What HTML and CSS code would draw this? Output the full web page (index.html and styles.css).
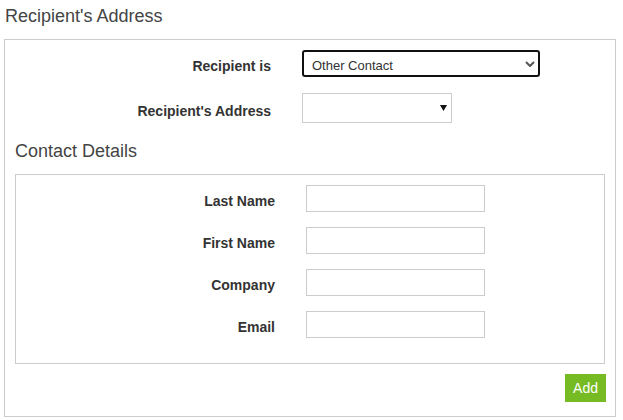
FILE: index.html
```html
<!DOCTYPE html>
<html lang="en">
<head>
  <meta charset="UTF-8" />
  <meta name="viewport" content="width=device-width, initial-scale=1.0" />
  <title>Recipient's Address</title>
  <link rel="stylesheet" href="styles.css">
</head>
<body>
  <div class="page">
    <h3 class="section-title">Recipient's Address</h3>

    <div class="panel">
      <div class="form-row">
        <label class="row-label" for="recipientIs">Recipient is</label>
        <div class="select-wrap select-main">
          <select id="recipientIs" class="select-focus">
            <option>Other Contact</option>
          </select>
          <svg class="chevron" width="10" height="6" viewBox="0 0 10 6">
            <path d="M1 1 L5 5 L9 1" fill="none" stroke="#555" stroke-width="2" />
          </svg>
        </div>
      </div>

      <div class="form-row">
        <label class="row-label" for="recipientAddress">Recipient's Address</label>
        <div class="select-wrap select-small">
          <select id="recipientAddress" class="select-plain">
            <option></option>
          </select>
          <svg class="caret" width="7" height="6" viewBox="0 0 7 6">
            <polygon points="0,0 7,0 3.5,6" fill="#111" />
          </svg>
        </div>
      </div>

      <h3 class="section-title sub-title">Contact Details</h3>

      <div class="contact-box">
        <div class="form-row contact-row">
          <label class="row-label" for="lastName">Last Name</label>
          <input id="lastName" type="text" class="text-input" />
        </div>
        <div class="form-row contact-row">
          <label class="row-label" for="firstName">First Name</label>
          <input id="firstName" type="text" class="text-input" />
        </div>
        <div class="form-row contact-row">
          <label class="row-label" for="company">Company</label>
          <input id="company" type="text" class="text-input" />
        </div>
        <div class="form-row contact-row">
          <label class="row-label" for="email">Email</label>
          <input id="email" type="text" class="text-input" />
        </div>
      </div>

      <div class="actions">
        <button class="btn-add">Add</button>
      </div>
    </div>
  </div>
</body>
</html>
```

FILE: styles.css
```css
body {
  margin: 0;
  font-family: "Liberation Sans", Arial, sans-serif;
  color: #333;
  background: #fff;
}

.page {
  padding: 6px 7px 0 4px;
}

.section-title {
  margin: 0 0 13px 1px;
  font-size: 18px;
  line-height: 20px;
  font-weight: normal;
  color: #444;
}

/* Outer bordered panel */
.panel {
  border: 1px solid #ccc;
  padding: 10px 10px 14px;
}

.form-row {
  display: grid;
  grid-template-columns: 256px auto;
  column-gap: 31px;
  align-items: center;
  margin-bottom: 16px;
}

.row-label {
  text-align: right;
  font-size: 14px;
  font-weight: bold;
  color: #333;
  padding-top: 5px;
}

.select-wrap {
  position: relative;
  justify-self: start;
}

select {
  appearance: none;
  -webkit-appearance: none;
  display: block;
  font-family: "Liberation Sans", Arial, sans-serif;
  font-size: 13px;
  color: #333;
  background: #fff;
  box-sizing: border-box;
  margin: 0;
  outline: none;
}

.select-focus {
  width: 238px;
  height: 27px;
  border: 2px solid #111;
  border-radius: 3px;
  padding: 3px 24px 0 8px;
}

.select-plain {
  width: 150px;
  height: 30px;
  border: 1px solid #ccc;
  border-radius: 0;
  padding: 0 20px 0 8px;
}

.chevron {
  position: absolute;
  right: 5px;
  top: 11px;
  pointer-events: none;
}

.caret {
  position: absolute;
  right: 5px;
  top: 12px;
  pointer-events: none;
}

.sub-title {
  margin: 18px 0 13px 0;
}

/* Inner contact details box */
.contact-box {
  border: 1px solid #ccc;
  padding: 10px 0 25px;
}

.contact-row {
  grid-template-columns: 259px auto;
  margin-bottom: 15px;
}

.contact-row:last-child {
  margin-bottom: 0;
}

.text-input {
  width: 179px;
  height: 27px;
  box-sizing: border-box;
  border: 1px solid #ccc;
  margin: 0;
  padding: 0 6px;
  font-size: 13px;
}

.actions {
  display: flex;
  justify-content: flex-end;
  margin-top: 10px;
  margin-right: -1px;
}

.btn-add {
  background: #76bb23;
  color: #fff;
  border: none;
  height: 28px;
  padding: 0 8px;
  font-family: "Liberation Sans", Arial, sans-serif;
  font-size: 14px;
  cursor: pointer;
}
```
